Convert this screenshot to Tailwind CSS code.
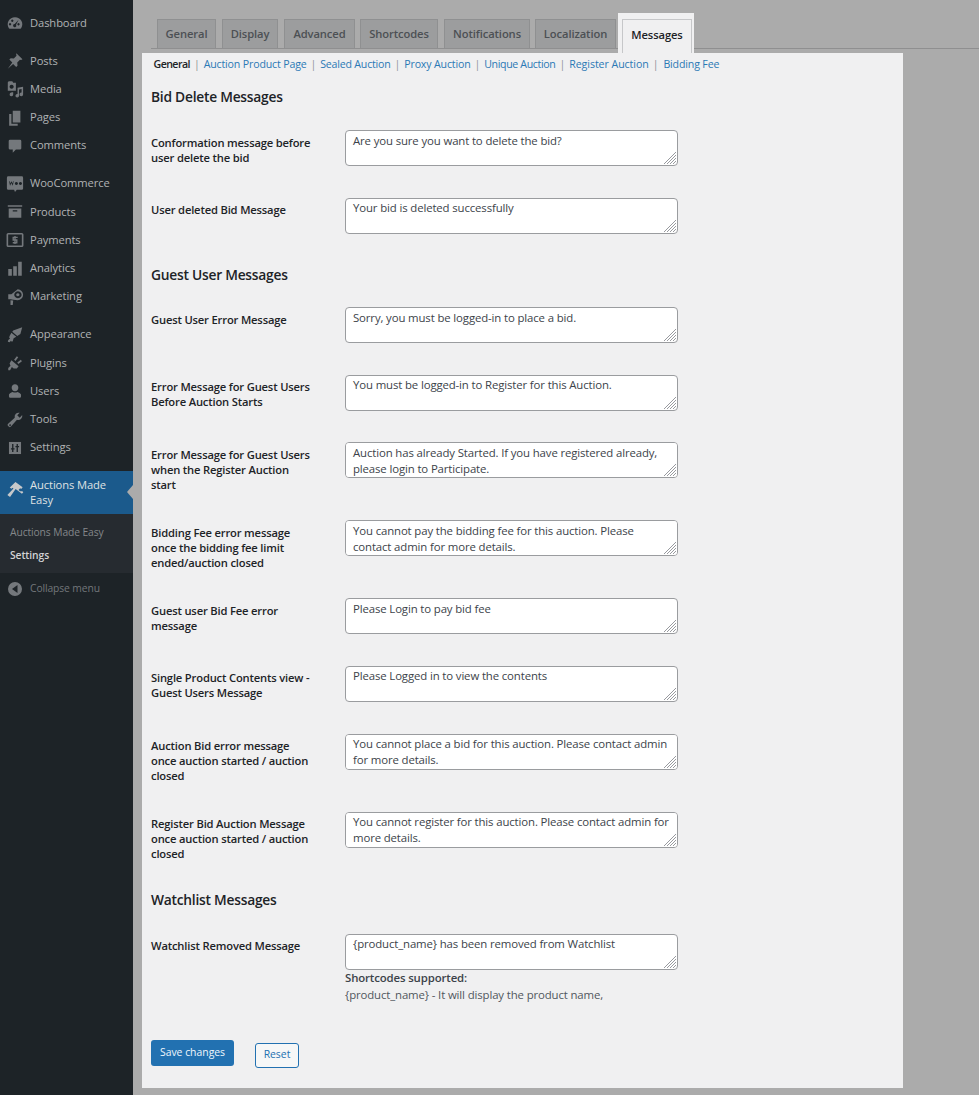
<!DOCTYPE html>
<html lang="en">
<head>
<meta charset="UTF-8">
<title>Auctions Made Easy Settings</title>
<script src="https://cdn.jsdelivr.net/npm/@tailwindcss/browser@4"></script>
</head>
<body class="bg-[#ababab] font-['Open_Sans',sans-serif] text-[#32373c] overflow-hidden">
<div class="flex h-[1095px] w-[979px] overflow-hidden">

  <!-- Sidebar -->
  <nav class="w-[133px] shrink-0 bg-[#1d2327] pt-[9px] text-[11.2px] tracking-[-0.1px] text-[#b0b2b4]">
    <a class="flex items-center h-[28.3px] mb-[9.5px] pl-[6px] gap-[6px]"><svg class="w-[18px] h-[18px]" viewBox="0 0 20 20" fill="#74787c"><path fill-rule="evenodd" d="M10 3.500a8 8 0 0 0-6.800 12.300l.8.7h12l.8-.7A8 8 0 0 0 10 3.500zM5.800 11.500a1.300 1.300 0 1 1 0-.1zm2.500-4a1.300 1.300 0 1 1 0-.1zm6.900 4a1.300 1.300 0 1 1 0-.1zm-1.200-5.200L11.200 12a1.800 1.800 0 1 1-1.500-.9z"/></svg>Dashboard</a>

    <a class="flex items-center h-[28.3px] pl-[6px] gap-[6px]"><svg class="w-[18px] h-[18px]" viewBox="0 0 20 20" fill="#74787c"><path d="M11.500 1.500l6.800 6.500-1.500 1-1.300-.3-3 3 .3 3.500-1.500 1.500-3.400-3.400L2 18.500l5-6.900-3.300-3.200L5.300 7l3.400.3 3-3-.4-1.400z"/></svg>Posts</a>
    <a class="flex items-center h-[28.3px] pl-[6px] gap-[6px]"><svg class="w-[18px] h-[18px]" viewBox="0 0 20 20" fill="#74787c"><path fill-rule="evenodd" d="M3 1.500h4l1 1.500h3V12H2V2.500zm3.200 3.700a2.300 2.300 0 1 0 .1 0zM19 7.500V16a2 2 0 1 1-1.700-2V10l-2.800.6V17.500a2 2 0 1 1-1.700-2V8.500zM8 13.500V16a2 2 0 1 1-1.700-2v-.5z"/></svg>Media</a>
    <a class="flex items-center h-[28.3px] pl-[6px] gap-[6px]"><svg class="w-[18px] h-[18px]" viewBox="0 0 20 20" fill="#74787c"><path d="M7.500 2H16v13H7.500zM3.500 5.500H6V16.500H13V18.500H3.500z"/></svg>Pages</a>
    <a class="flex items-center h-[28.3px] mb-[9.5px] pl-[6px] gap-[6px]"><svg class="w-[18px] h-[18px]" viewBox="0 0 20 20" fill="#74787c"><path d="M4.500 3h11A1.500 1.500 0 0 1 17 4.500v8a1.500 1.500 0 0 1-1.500 1.500H11l-3.500 3.500V14h-3A1.500 1.500 0 0 1 3 12.500v-8A1.500 1.500 0 0 1 4.500 3z"/></svg>Comments</a>

    <a class="flex items-center h-[28.3px] pl-[6px] gap-[6px]"><svg class="w-[18px] h-[18px]" viewBox="0 0 20 20" fill="#74787c"><path fill-rule="evenodd" d="M2.500 1.500h15A1.500 1.500 0 0 1 19 3v12a1.500 1.500 0 0 1-1.500 1.500H12L10 19l-1-2.500H2.500A1.500 1.500 0 0 1 1 15V3a1.500 1.500 0 0 1 1.500-1.500zm1 5.500l1 5 1.500-3 1.500 3 1-5H7.800l-.4 2.500L6 7 4.600 9.500 4.200 7zm8 .8a1.700 1.700 0 1 0 .1 0zm4.500 0a1.700 1.700 0 1 0 .1 0z"/></svg>WooCommerce</a>
    <a class="flex items-center h-[28.3px] pl-[6px] gap-[6px]"><svg class="w-[18px] h-[18px]" viewBox="0 0 20 20" fill="#74787c"><path fill-rule="evenodd" d="M2 2.500h16v1.800H2zM3 6h14v10.500H3zM7.500 8v1.500h5V8z"/></svg>Products</a>
    <a class="flex items-center h-[28.3px] pl-[6px] gap-[6px]"><svg class="w-[18px] h-[18px]" viewBox="0 0 20 20" fill="none" stroke="#74787c" stroke-width="1.800"><rect x="1.500" y="3" width="17" height="14" rx="1"/><path d="M13 7H8v3h4v3H7.500M10 5.500v9" stroke-width="1.500"/></svg>Payments</a>
    <a class="flex items-center h-[28.3px] pl-[6px] gap-[6px]"><svg class="w-[18px] h-[18px]" viewBox="0 0 20 20" fill="#74787c"><path d="M2.500 10H6.500V17.500H2.500zM8 7H12V17.500H8zM13.500 2H17.500V17.500H13.500z"/></svg>Analytics</a>
    <a class="flex items-center h-[28.3px] mb-[9.5px] pl-[6px] gap-[6px]"><svg class="w-[18px] h-[18px]" viewBox="0 0 20 20" fill="#74787c"><path fill-rule="evenodd" d="M13 1.500a6 6 0 1 1 0 12L6 12.800v-.3H2.500V7H6zm.2 2a4 4 0 1 0 .1 0zm0 2.200a1.800 1.800 0 1 1-.1 0zM5 13.500l3 .5-.5 5H5z"/></svg>Marketing</a>

    <a class="flex items-center h-[28.3px] pl-[6px] gap-[6px]"><svg class="w-[18px] h-[18px]" viewBox="0 0 20 20" fill="#74787c"><path d="M8 5l10-3.500L16 9l-3.500 2L7 6.500zM6 7.500l5.500 4.500-3 1.500-1 3.500-1 .5-1-1.200-1.500 1.700-2-.5.500-2 2-1.500-1-1.200L4 11z"/></svg>Appearance</a>
    <a class="flex items-center h-[28.3px] pl-[6px] gap-[6px]"><svg class="w-[18px] h-[18px]" viewBox="0 0 20 20" fill="#74787c"><path d="M6 7l8 6.500-2 2.500-3.500 0-2-1.500L4.500 18H2.500v-2.500l2.500-2.500-1-2.500zM9 6.500l3-4 1.600 1.200-3 4zM12.500 9.500l4-3 1.200 1.600-4 3z"/></svg>Plugins</a>
    <a class="flex items-center h-[28.3px] pl-[6px] gap-[6px]"><svg class="w-[18px] h-[18px]" viewBox="0 0 20 20" fill="#74787c"><path d="M10 2.500a3.700 3.700 0 0 1 3.700 4c0 2-1.400 3.800-3.700 3.800S6.300 8.500 6.300 6.500A3.700 3.700 0 0 1 10 2.500zM3.300 14c1-2 3.200-3 4.200-3 1 .8 4 .8 5 0 1 0 3.200 1 4.200 3v2a1.500 1.500 0 0 1-1.500 1.500H4.800A1.500 1.500 0 0 1 3.300 16z"/></svg>Users</a>
    <a class="flex items-center h-[28.3px] pl-[6px] gap-[6px]"><svg class="w-[18px] h-[18px]" viewBox="0 0 20 20" fill="#74787c"><path fill-rule="evenodd" d="M18 4.500a4.500 4.500 0 0 1-5.800 5.300L6 16.800a2.200 2.200 0 1 1-3-3.100l6.700-6.300A4.500 4.500 0 0 1 15.200 2L12.500 4.800l2.700 2.700zM4.500 14.700a1 1 0 1 0 .1 0z"/></svg>Tools</a>
    <a class="flex items-center h-[28.3px] mb-[9px] pl-[6px] gap-[6px]"><svg class="w-[18px] h-[18px]" viewBox="0 0 20 20"><rect x="3.300" y="3.300" width="13.400" height="13.400" fill="#74787c"/><path d="M7.500 5.500v9M5.500 11h4M12.500 5.500v9M10.500 8.500h4" stroke="#1d2327" stroke-width="1.500"/></svg>Settings</a>

    <a class="relative flex items-start h-[43px] pl-[6px] pt-[7px] gap-[6px] bg-[#1b5a8c] text-[#dfe1e3] leading-[15px]"><svg class="w-[18px] h-[18px] shrink-0 mt-[3px]" viewBox="0 0 20 20" fill="#c6c8ca"><path d="M10.500 1l8 6-1.600 2-1.200-.9-1.800 2 1.800 1.400 2.500 0 1 1-1.500 1.800-7-5.300L4.500 17.800 1.500 15.500l6.800-7.300-1-.8-1.300 1.300-1.800-1.400z"/></svg><span class="w-[92px] -mt-[0.5px]">Auctions Made Easy</span><svg class="absolute right-0 top-[14px] w-[6px] h-[14px]" viewBox="0 0 6 14" fill="#ababab"><path d="M6 0v14L0 7z"/></svg></a>
    <div class="bg-[#262b30] h-[59px] pl-[10px] pt-[10px] text-[10.3px]">
      <a class="block h-[23px] leading-[16px] text-[#84878a]">Auctions Made Easy</a>
      <a class="block leading-[16px] font-semibold text-[#d2d3d4]">Settings</a>
    </div>
    <a class="flex items-center h-[32px] pl-[8px] gap-[8px] text-[10.3px] text-[#72767a]"><svg class="w-[14px] h-[14px]" viewBox="0 0 14 14" fill="#74787c"><path fill-rule="evenodd" d="M7 0a7 7 0 1 1 0 14A7 7 0 0 1 7 0zm2.500 3L4 7l5.500 4z"/></svg>Collapse menu</a>
  </nav>

  <!-- Main -->
  <main class="flex-1 min-w-0">
    <div class="ml-[18px] pl-[6px] h-[49px] border-b border-[#8f8f90] flex items-end gap-[6px] text-[11.2px] tracking-[-0.1px] font-semibold text-[#4c5054]">
      <a class="h-[29px] w-[59px] pt-[1px] flex items-center justify-center border border-b-0 border-[#8f9091] bg-[#9c9d9e]">General</a>
      <a class="h-[29px] w-[56px] pt-[1px] flex items-center justify-center border border-b-0 border-[#8f9091] bg-[#9c9d9e]">Display</a>
      <a class="h-[29px] w-[71px] pt-[1px] flex items-center justify-center border border-b-0 border-[#8f9091] bg-[#9c9d9e]">Advanced</a>
      <a class="h-[29px] w-[78px] pt-[1px] -ml-[1px] flex items-center justify-center border border-b-0 border-[#8f9091] bg-[#9c9d9e]">Shortcodes</a>
      <a class="h-[29px] w-[86px] pt-[1px] flex items-center justify-center border border-b-0 border-[#8f9091] bg-[#9c9d9e]">Notifications</a>
      <a class="h-[29px] w-[81px] pt-[1px] -ml-[1px] flex items-center justify-center border border-b-0 border-[#8f9091] bg-[#9c9d9e]">Localization</a>
      <div class="relative z-10 -ml-[4px] -mb-[5px] h-[40px] w-[76px] shrink-0 bg-[#f0f0f1] pl-[4px] pr-[2px] pt-[6px]">
        <a class="h-[34px] flex items-start pt-[7px] justify-center border border-b-0 border-[#c6c7c9] text-[#1d2327]">Messages</a>
      </div>
    </div>

    <div class="ml-[9px] mt-[4px] w-[761px] h-[1035px] bg-[#f0f0f1] pl-[9px] text-[11.4px] tracking-[-0.13px]">
      <div class="flex items-center h-[23px] pl-[2.500px] gap-[4px] text-[#2b79b5] text-[10.6px] tracking-[-0.15px]">
        <b class="font-semibold tracking-[-0.55px] text-[#1d2327]">General</b><span class="text-[#8f9296]">|</span><a>Auction Product Page</a><span class="text-[#8f9296]">|</span><a class="tracking-[-0.2px]">Sealed Auction</a><span class="text-[#8f9296]">|</span><a>Proxy Auction</a><span class="text-[#8f9296]">|</span><a class="tracking-[-0.35px]">Unique Auction</a><span class="text-[#8f9296]">|</span><a class="tracking-[-0.05px]">Register Auction</a><span class="text-[#8f9296]">|</span><a class="ml-[1px]">Bidding Fee</a>
      </div>

      <h2 class="h-[41.500px] pt-[11px] text-[13.800px] tracking-[-0.25px] leading-[20px] font-semibold text-[#1d2327]">Bid Delete Messages</h2>

      <div class="flex min-h-[67.600px]">
        <div class="w-[194px] pt-[17px] pb-[16px] pr-[31px] text-[11.2px] tracking-[-0.17px] leading-[15px] font-semibold text-[#1d2327]">Conformation message before user delete the bid</div>
        <div class="relative self-start mt-[12.500px]"><textarea class="block w-[333px] h-[36px] px-[7px] py-[1.500px] resize-none border border-[#9a9c9f] rounded-[4px] bg-white leading-[16.300px] text-[#3c434a]">Are you sure you want to delete the bid?</textarea><svg class="absolute right-[2px] bottom-[2px] w-[12px] h-[12px]" viewBox="0 0 12 12" stroke="#8c8f94" stroke-width="0.900"><path d="M0 12L12 0M3 12L12 3M6 12L12 6M9 12L12 9"/></svg></div>
      </div>
      <div class="flex min-h-[67.600px]">
        <div class="w-[194px] pt-[17px] pb-[16px] pr-[31px] text-[11.2px] tracking-[-0.17px] leading-[15px] font-semibold text-[#1d2327]">User deleted Bid Message</div>
        <div class="relative self-start mt-[12.500px]"><textarea class="block w-[333px] h-[36px] px-[7px] py-[1.500px] resize-none border border-[#9a9c9f] rounded-[4px] bg-white leading-[16.300px] text-[#3c434a]">Your bid is deleted successfully</textarea><svg class="absolute right-[2px] bottom-[2px] w-[12px] h-[12px]" viewBox="0 0 12 12" stroke="#8c8f94" stroke-width="0.900"><path d="M0 12L12 0M3 12L12 3M6 12L12 6M9 12L12 9"/></svg></div>
      </div>

      <h2 class="h-[42px] pt-[12px] text-[13.800px] tracking-[-0.25px] leading-[20px] font-semibold text-[#1d2327]">Guest User Messages</h2>

      <div class="flex min-h-[67.600px]">
        <div class="w-[194px] pt-[17px] pb-[16px] pr-[31px] text-[11.2px] tracking-[-0.17px] leading-[15px] font-semibold text-[#1d2327]">Guest User Error Message</div>
        <div class="relative self-start mt-[12.500px]"><textarea class="block w-[333px] h-[36px] px-[7px] py-[1.500px] resize-none border border-[#9a9c9f] rounded-[4px] bg-white leading-[16.300px] text-[#3c434a]">Sorry, you must be logged-in to place a bid.</textarea><svg class="absolute right-[2px] bottom-[2px] w-[12px] h-[12px]" viewBox="0 0 12 12" stroke="#8c8f94" stroke-width="0.900"><path d="M0 12L12 0M3 12L12 3M6 12L12 6M9 12L12 9"/></svg></div>
      </div>
      <div class="flex min-h-[67.600px]">
        <div class="w-[194px] pt-[17px] pb-[16px] pr-[31px] text-[11.2px] tracking-[-0.17px] leading-[15px] font-semibold text-[#1d2327]">Error Message for Guest Users Before Auction Starts</div>
        <div class="relative self-start mt-[12.500px]"><textarea class="block w-[333px] h-[36px] px-[7px] py-[1.500px] resize-none border border-[#9a9c9f] rounded-[4px] bg-white leading-[16.300px] text-[#3c434a]">You must be logged-in to Register for this Auction.</textarea><svg class="absolute right-[2px] bottom-[2px] w-[12px] h-[12px]" viewBox="0 0 12 12" stroke="#8c8f94" stroke-width="0.900"><path d="M0 12L12 0M3 12L12 3M6 12L12 6M9 12L12 9"/></svg></div>
      </div>
      <div class="flex min-h-[67.600px]">
        <div class="w-[194px] pt-[17px] pb-[16px] pr-[31px] text-[11.2px] tracking-[-0.17px] leading-[15px] font-semibold text-[#1d2327]">Error Message for Guest Users when the Register Auction start</div>
        <div class="relative self-start mt-[12.500px]"><textarea class="block w-[333px] h-[36px] px-[7px] py-[1.500px] resize-none border border-[#9a9c9f] rounded-[4px] bg-white leading-[16.300px] text-[#3c434a]">Auction has already Started. If you have registered already, please login to Participate.</textarea><svg class="absolute right-[2px] bottom-[2px] w-[12px] h-[12px]" viewBox="0 0 12 12" stroke="#8c8f94" stroke-width="0.900"><path d="M0 12L12 0M3 12L12 3M6 12L12 6M9 12L12 9"/></svg></div>
      </div>
      <div class="flex min-h-[67.600px]">
        <div class="w-[194px] pt-[17px] pb-[16px] pr-[31px] text-[11.2px] tracking-[-0.17px] leading-[15px] font-semibold text-[#1d2327]">Bidding Fee error message once the bidding fee limit ended/auction closed</div>
        <div class="relative self-start mt-[12.500px]"><textarea class="block w-[333px] h-[36px] px-[7px] py-[1.500px] resize-none border border-[#9a9c9f] rounded-[4px] bg-white leading-[16.300px] text-[#3c434a]">You cannot pay the bidding fee for this auction. Please contact admin for more details.</textarea><svg class="absolute right-[2px] bottom-[2px] w-[12px] h-[12px]" viewBox="0 0 12 12" stroke="#8c8f94" stroke-width="0.900"><path d="M0 12L12 0M3 12L12 3M6 12L12 6M9 12L12 9"/></svg></div>
      </div>
      <div class="flex min-h-[67.600px]">
        <div class="w-[194px] pt-[17px] pb-[16px] pr-[31px] text-[11.2px] tracking-[-0.17px] leading-[15px] font-semibold text-[#1d2327]">Guest user Bid Fee error message</div>
        <div class="relative self-start mt-[12.500px]"><textarea class="block w-[333px] h-[36px] px-[7px] py-[1.500px] resize-none border border-[#9a9c9f] rounded-[4px] bg-white leading-[16.300px] text-[#3c434a]">Please Login to pay bid fee</textarea><svg class="absolute right-[2px] bottom-[2px] w-[12px] h-[12px]" viewBox="0 0 12 12" stroke="#8c8f94" stroke-width="0.900"><path d="M0 12L12 0M3 12L12 3M6 12L12 6M9 12L12 9"/></svg></div>
      </div>
      <div class="flex min-h-[67.600px]">
        <div class="w-[194px] pt-[17px] pb-[16px] pr-[31px] text-[11.2px] tracking-[-0.17px] leading-[15px] font-semibold text-[#1d2327]">Single Product Contents view - Guest Users Message</div>
        <div class="relative self-start mt-[12.500px]"><textarea class="block w-[333px] h-[36px] px-[7px] py-[1.500px] resize-none border border-[#9a9c9f] rounded-[4px] bg-white leading-[16.300px] text-[#3c434a]">Please Logged in to view the contents</textarea><svg class="absolute right-[2px] bottom-[2px] w-[12px] h-[12px]" viewBox="0 0 12 12" stroke="#8c8f94" stroke-width="0.900"><path d="M0 12L12 0M3 12L12 3M6 12L12 6M9 12L12 9"/></svg></div>
      </div>
      <div class="flex min-h-[67.600px]">
        <div class="w-[194px] pt-[17px] pb-[16px] pr-[31px] text-[11.2px] tracking-[-0.17px] leading-[15px] font-semibold text-[#1d2327]">Auction Bid error message once auction started / auction closed</div>
        <div class="relative self-start mt-[12.500px]"><textarea class="block w-[333px] h-[36px] px-[7px] py-[1.500px] resize-none border border-[#9a9c9f] rounded-[4px] bg-white leading-[16.300px] text-[#3c434a]">You cannot place a bid for this auction. Please contact admin for more details.</textarea><svg class="absolute right-[2px] bottom-[2px] w-[12px] h-[12px]" viewBox="0 0 12 12" stroke="#8c8f94" stroke-width="0.900"><path d="M0 12L12 0M3 12L12 3M6 12L12 6M9 12L12 9"/></svg></div>
      </div>
      <div class="flex min-h-[67.600px]">
        <div class="w-[194px] pt-[17px] pb-[16px] pr-[31px] text-[11.2px] tracking-[-0.17px] leading-[15px] font-semibold text-[#1d2327]">Register Bid Auction Message once auction started / auction closed</div>
        <div class="relative self-start mt-[12.500px]"><textarea class="block w-[333px] h-[36px] px-[7px] py-[1.500px] resize-none border border-[#9a9c9f] rounded-[4px] bg-white leading-[16.300px] text-[#3c434a]">You cannot register for this auction. Please contact admin for more details.</textarea><svg class="absolute right-[2px] bottom-[2px] w-[12px] h-[12px]" viewBox="0 0 12 12" stroke="#8c8f94" stroke-width="0.900"><path d="M0 12L12 0M3 12L12 3M6 12L12 6M9 12L12 9"/></svg></div>
      </div>

      <h2 class="h-[44px] pt-[13px] text-[13.800px] tracking-[-0.25px] leading-[20px] font-semibold text-[#1d2327]">Watchlist Messages</h2>

      <div class="flex">
        <div class="w-[194px] pt-[17px] pr-[31px] text-[11.2px] tracking-[-0.17px] leading-[15px] font-semibold text-[#1d2327]">Watchlist Removed Message</div>
        <div class="pt-[12.500px]">
          <div class="relative"><textarea class="block w-[333px] h-[36px] px-[7px] py-[1.500px] resize-none border border-[#9a9c9f] rounded-[4px] bg-white leading-[16.300px] text-[#3c434a]">{product_name} has been removed from Watchlist</textarea><svg class="absolute right-[2px] bottom-[2px] w-[12px] h-[12px]" viewBox="0 0 12 12" stroke="#8c8f94" stroke-width="0.900"><path d="M0 12L12 0M3 12L12 3M6 12L12 6M9 12L12 9"/></svg></div>
          <p class="-mt-[1px] leading-[17px] font-semibold text-[#3c434a]">Shortcodes supported:</p>
          <p class="leading-[17px] text-[#50575e]">{product_name} - It will display the product name,</p>
        </div>
      </div>

      <div class="flex items-start mt-[37px] gap-[21px] text-[10.4px] tracking-normal">
        <button class="w-[83px] h-[26px] bg-[#2271b1] rounded-[3px] text-[#f0f6fc]">Save changes</button>
        <button class="mt-[3px] w-[44px] h-[25px] border border-[#2271b1] rounded-[3px] bg-[#f6f7f7] text-[#2271b1]">Reset</button>
      </div>
    </div>
  </main>
</div>
</body>
</html>
